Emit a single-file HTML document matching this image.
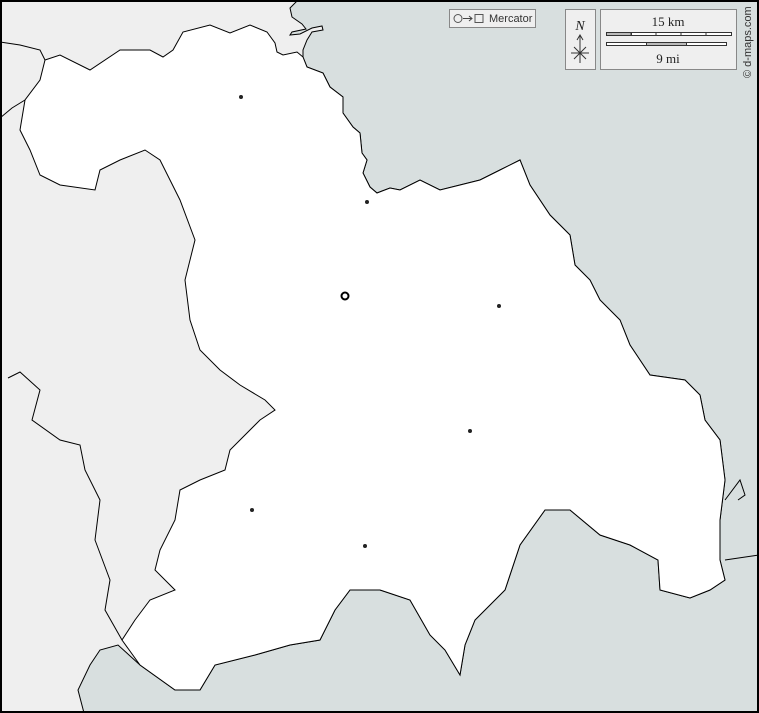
<!DOCTYPE html><html><head><style>body{margin:0}svg{display:block}</style></head><body>
<svg width="759" height="713" viewBox="0 0 759 713" xmlns="http://www.w3.org/2000/svg" font-family="Liberation Serif, serif">
<rect width="759" height="713" fill="#efefef"/>
<path d="M298,0 L290,8 L292,17 L302,24 L306,29 L292,32 L290,35 L300,34 L312,28 L322,26 L323,30 L312,32 L307,40 L303,50 L303,57 L307,67 L323,73 L330,87 L343,97 L343,113 L353,127 L360,133 L362,153 L367,160 L363,173 L370,187 L377,193 L390,188 L400,190 L420,180 L440,190 L460,185 L480,180 L500,170 L520,160 L530,185 L550,215 L570,235 L575,265 L590,280 L600,300 L620,320 L630,345 L650,375 L685,380 L700,395 L705,420 L720,440 L725,480 L720,520 L720,560 L725,580 L710,590 L690,598 L660,590 L658,560 L630,545 L600,535 L570,510 L545,510 L520,545 L505,590 L475,620 L465,645 L460,675 L445,650 L430,635 L410,600 L380,590 L350,590 L335,610 L320,640 L290,645 L255,655 L215,665 L200,690 L175,690 L140,665 L118,645 L100,650 L90,665 L78,690 L84,713 L759,713 L759,0 Z" fill="#d8dfdf" stroke="#000" stroke-width="1"/>
<path d="M45,60 L60,55 L90,70 L120,50 L150,50 L163,57 L173,50 L183,32 L210,25 L230,33 L250,25 L267,32 L275,43 L277,52 L283,55 L297,52 L303,57 L307,67 L323,73 L330,87 L343,97 L343,113 L353,127 L360,133 L362,153 L367,160 L363,173 L370,187 L377,193 L390,188 L400,190 L420,180 L440,190 L460,185 L480,180 L500,170 L520,160 L530,185 L550,215 L570,235 L575,265 L590,280 L600,300 L620,320 L630,345 L650,375 L685,380 L700,395 L705,420 L720,440 L725,480 L720,520 L720,560 L725,580 L710,590 L690,598 L660,590 L658,560 L630,545 L600,535 L570,510 L545,510 L520,545 L505,590 L475,620 L465,645 L460,675 L445,650 L430,635 L410,600 L380,590 L350,590 L335,610 L320,640 L290,645 L255,655 L215,665 L200,690 L175,690 L140,665 L122,640 L135,620 L150,600 L175,590 L155,570 L160,550 L175,520 L180,490 L200,480 L225,470 L230,450 L260,420 L275,410 L265,400 L240,385 L220,370 L200,350 L190,320 L185,280 L195,240 L180,200 L160,160 L145,150 L120,160 L100,170 L95,190 L60,185 L40,175 L30,150 L20,130 L25,100 L40,80 Z" fill="#fff" stroke="#000" stroke-width="1"/>
<g fill="none" stroke="#000" stroke-width="1">
<path d="M0,42 L20,45 L40,50 L45,60"/>
<path d="M0,118 L12,108 L25,100"/>
<path d="M8,378 L20,372 L40,390 L32,420 L60,440 L80,445 L85,470 L100,500 L95,540 L110,580 L105,610 L122,640"/>
<path d="M725,500 L740,480 L745,495 L738,500 M725,560 L759,555"/>
</g>
<g fill="#222"><circle cx="241" cy="97" r="2"/><circle cx="367" cy="202" r="2"/><circle cx="499" cy="306" r="2"/><circle cx="470" cy="431" r="2"/><circle cx="252" cy="510" r="2"/><circle cx="365" cy="546" r="2"/></g>
<circle cx="345" cy="296" r="3.5" fill="#fff" stroke="#000" stroke-width="2"/>
<rect x="449.5" y="9.5" width="86" height="18" fill="#efefef" stroke="#888"/>
<circle cx="458" cy="18.5" r="4" fill="none" stroke="#555"/>
<path d="M463,18.5 H472 M469,16 L472,18.5 L469,21" stroke="#444" fill="none"/>
<rect x="475" y="14.5" width="8" height="8" fill="none" stroke="#555"/>
<text x="489" y="22" font-size="11" font-family="Liberation Sans,sans-serif" fill="#333">Mercator</text>
<rect x="565.5" y="9.5" width="30" height="60" fill="#efefef" stroke="#888"/>
<text x="580" y="30" font-size="14" font-style="italic" text-anchor="middle" fill="#222">N</text>
<path d="M580,36 V63 M577,40 L580,35 L583,40 M571,53 H589 M574,47 L586,59 M586,47 L574,59" stroke="#333" fill="none"/>
<rect x="600.5" y="9.5" width="136" height="60" fill="#efefef" stroke="#888"/>
<text x="668" y="26" font-size="13" text-anchor="middle" fill="#222">15 km</text>
<rect x="606.5" y="32.5" width="125" height="3" fill="#fff" stroke="#333"/>
<rect x="606.5" y="32.5" width="25" height="3" fill="#bbb" stroke="#333"/>
<path d="M631,32 V36 M656,32 V36 M681,32 V36 M706,32 V36" stroke="#333"/>
<rect x="606.5" y="42.5" width="120" height="3" fill="#fff" stroke="#333"/>
<rect x="646.5" y="42.5" width="40" height="3" fill="#bbb" stroke="#333"/>
<text x="668" y="63" font-size="13" text-anchor="middle" fill="#222">9 mi</text>
<text transform="translate(751,78) rotate(-90)" font-size="11" font-family="Liberation Sans,sans-serif" fill="#333">© d-maps.com</text>
<rect x="1" y="1" width="757" height="711" fill="none" stroke="#000" stroke-width="2"/>
</svg>
</body></html>
